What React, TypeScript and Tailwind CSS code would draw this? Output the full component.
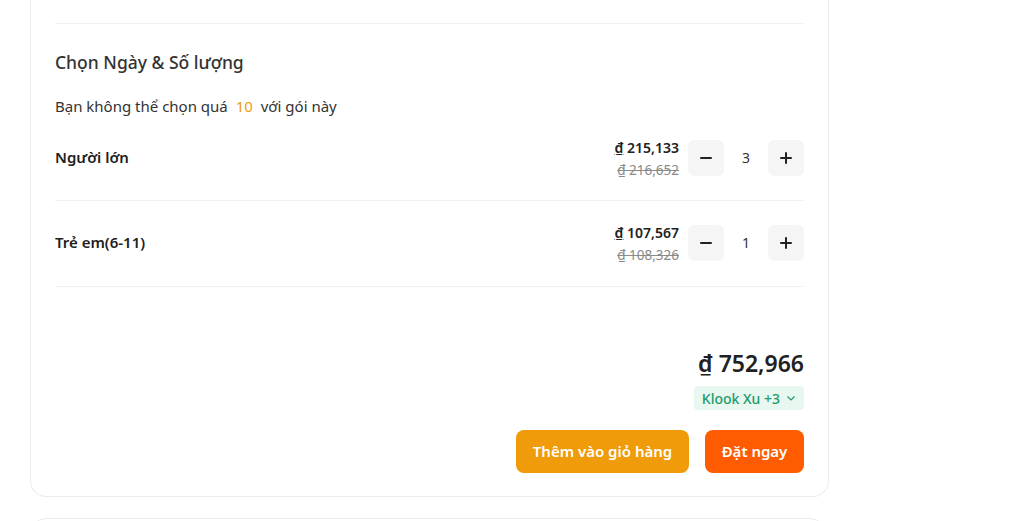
import React from 'react';

type Item = { label: string; price: string; old: string; qty: number };

const items: Item[] = [
  { label: 'Người lớn', price: '215,133', old: '216,652', qty: 3 },
  { label: 'Trẻ em(6-11)', price: '107,567', old: '108,326', qty: 1 },
];

const StepBtn: React.FC<{ plus?: boolean }> = ({ plus }) => (
  <button className="w-9 h-9 rounded-md bg-[#f5f5f5] flex items-center justify-center text-[#212121]">
    <svg width="14" height="14" viewBox="0 0 14 14" fill="none" stroke="currentColor" strokeWidth={2} strokeLinecap="round">
      <path d="M2 7h10" />
      {plus && <path d="M7 2v10" />}
    </svg>
  </button>
);

export default function App() {
  return (
    <div className="w-[1024px] h-[521px] overflow-hidden bg-white pl-[30px] font-['Noto_Sans','Open_Sans',sans-serif] text-[#212121]">
      <div className="w-[799px] border border-t-0 border-[#ececec] rounded-b-2xl px-6 pt-[23px] pb-[23px]">
        <div className="border-t border-[#f0f0f0]" />
        <h2 className="mt-[25px] text-[17.5px] leading-[26px] font-medium text-[#333]">Chọn Ngày &amp; Số lượng</h2>
        <p className="mt-[21px] text-[15px] leading-[20px] text-[#333]">
          Bạn không thể chọn quá <span className="text-[#f09b0a] mx-1">10</span> với gói này
        </p>
        <div>
          {items.map((it, i) => (
            <div
              key={it.label}
              className={`flex items-center justify-between border-b border-[#f0f0f0] ${i === 0 ? 'pt-[18px] pb-[19px]' : 'pt-[18px] pb-[20px]'}`}
            >
              <span className="text-[15px] font-semibold">{it.label}</span>
              <div className="flex items-center">
                <div className="flex flex-col items-end mr-[9px] pt-[3px]">
                  <span className="text-[14px] leading-[22px] font-semibold">
                    <span className="underline">₫</span> {it.price}
                  </span>
                  <span className="text-[13.5px] leading-[22px] text-[#8a8a8a] line-through">₫ {it.old}</span>
                </div>
                <StepBtn />
                <span className="w-11 text-center text-[14px] text-[#333]">{it.qty}</span>
                <StepBtn plus />
              </div>
            </div>
          ))}
        </div>
        <div className="mt-[61px] flex flex-col items-end">
          <div className="text-[23px] leading-[30px] font-semibold text-[#212121]">
            <span className="underline">₫</span> 752,966
          </div>
          <div className="mt-[8px] flex items-center gap-1.5 h-6 px-2 rounded bg-[#e8f7f0] text-[#1e9b6b] text-[14px] font-medium">
            Klook Xu +3
            <svg width="10" height="10" viewBox="0 0 10 10" fill="none" stroke="currentColor" strokeWidth={1.2}>
              <path d="M1.5 3.5 5 7l3.5-3.5" />
            </svg>
          </div>
          <div className="mt-[20px] flex gap-4">
            <button className="h-[43px] w-[173px] rounded-lg bg-[#f09b0a] text-white text-[15px] font-semibold">Thêm vào giỏ hàng</button>
            <button className="h-[43px] w-[99px] rounded-lg bg-[#ff5b00] text-white text-[15px] font-semibold">Đặt ngay</button>
          </div>
        </div>
      </div>
      <div className="mt-[21px] w-[796px] h-10 border border-[#ececec] rounded-t-2xl" />
    </div>
  );
}
